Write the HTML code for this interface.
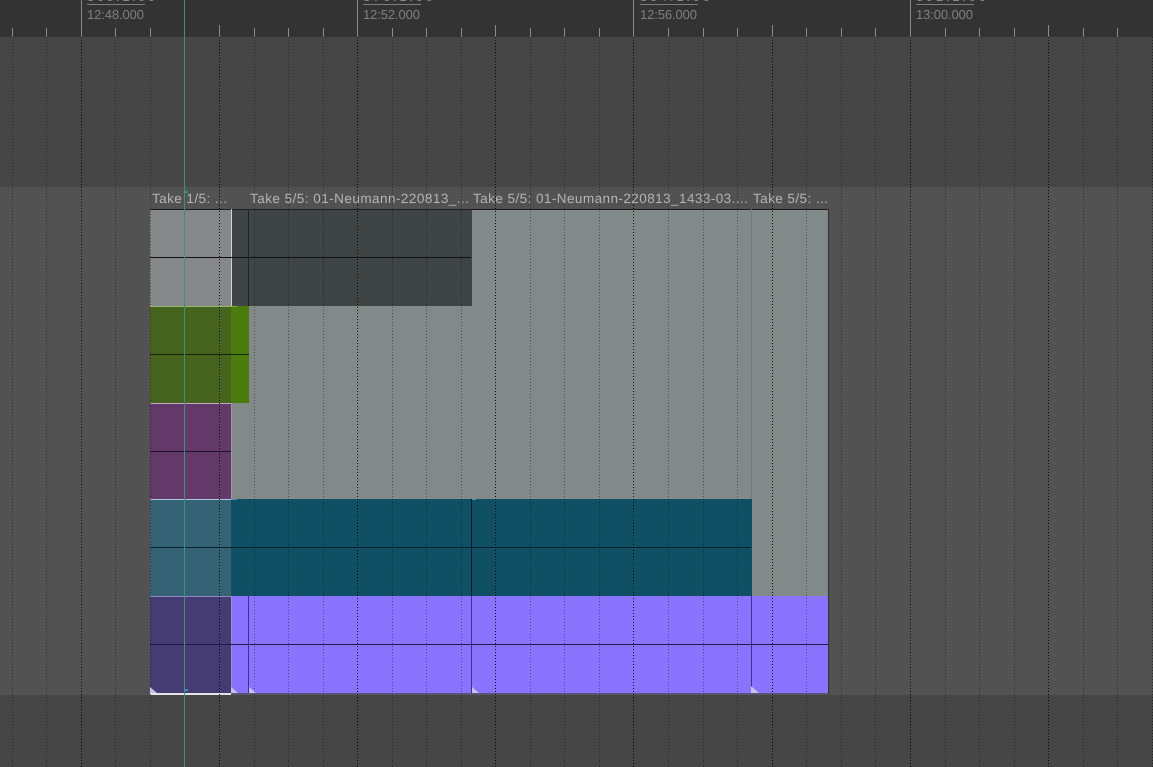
<!DOCTYPE html>
<html><head><meta charset="utf-8"><style>
html,body{margin:0;padding:0;background:#464646;width:1153px;height:767px;overflow:hidden}
svg{display:block;position:absolute;left:0;top:0}
text{font-family:"Liberation Sans",sans-serif}
</style></head><body>
<svg width="1153" height="767" viewBox="0 0 1153 767" shape-rendering="crispEdges">
<rect width="1153" height="767" fill="#464646"/>
<rect y="0" width="1153" height="37" fill="#333333"/>
<rect y="187" width="1153" height="508" fill="#525252"/>

<rect x="150" y="209" width="81" height="97" fill="#858888"/>
<rect x="231" y="209" width="597" height="387" fill="#818a88"/>
<rect x="231" y="209" width="241" height="97" fill="#3f4545"/>
<rect x="150" y="306" width="81" height="97" fill="#47641e"/>
<rect x="231" y="306" width="18" height="97" fill="#4a7c10"/>
<rect x="150" y="403" width="81" height="96" fill="#63396a"/>
<rect x="150" y="499" width="81" height="97" fill="#366276"/>
<rect x="231" y="499" width="521" height="97" fill="#0f5064"/>
<rect x="150" y="596" width="81" height="98" fill="#463c74"/>
<rect x="231" y="596" width="597" height="97" fill="#8a73ff"/>
<rect x="231" y="693" width="597" height="2" fill="#5a5570"/>
<rect x="150" y="693" width="81" height="2" fill="#e4e4e8"/>

<rect x="150" y="209" width="678" height="1" fill="#1c1c1c"/>
<rect x="828" y="209" width="1" height="485" fill="#2e2e38"/>
<rect x="231" y="209" width="1" height="97" fill="#d0d2d2"/>
<rect x="231" y="403" width="1" height="96" fill="#9a9a9e"/>
<rect x="231" y="596" width="1" height="97" fill="#9a94b8"/>
<rect x="150" y="306" width="81" height="1" fill="#9ab86a"/>
<rect x="231" y="306" width="6" height="1" fill="#7fb030"/>
<rect x="150" y="403" width="81" height="1" fill="#c0a8c8"/>
<rect x="150" y="499" width="81" height="1" fill="#b0c8dc"/>
<rect x="231" y="499" width="6" height="1" fill="#4a90a8"/>
<rect x="472" y="499" width="4" height="1" fill="#4a90a8"/>
<rect x="150" y="596" width="81" height="1" fill="#8f88c8"/>

<g fill="#000">
<rect x="150" y="257" width="321" height="1" fill="#101010"/>
<rect x="150" y="354" width="99" height="1" fill="#182008"/>
<rect x="150" y="451" width="81" height="1" fill="#20102a"/>
<rect x="150" y="547" width="601" height="1" fill="#04222c"/>
<rect x="150" y="644" width="678" height="1" fill="#201a50"/>
<rect x="248" y="209" width="1" height="97" fill="#1e2420"/>
<rect x="471" y="499" width="1" height="97" fill="#04222c"/>
<rect x="248" y="596" width="1" height="97" fill="#3a3090"/>
<rect x="471" y="596" width="1" height="97" fill="#3a3090"/>
<rect x="751" y="596" width="1" height="97" fill="#3a3090"/>
<rect x="751" y="209" width="1" height="290" fill="#737c7a"/>
</g>

<!-- minor grid -->
<g stroke="#000" stroke-opacity=".42" stroke-width="1" stroke-dasharray="1 2">
<path d="M12.5 37V767M46.5 37V767M115.5 37V767M150.5 37V767M254.5 37V767M288.5 37V767M323.5 37V767M392.5 37V767M426.5 37V767M461.5 37V767M530.5 37V767M564.5 37V767M599.5 37V767M668.5 37V767M703.5 37V767M737.5 37V767M806.5 37V767M841.5 37V767M875.5 37V767M945.5 37V767M979.5 37V767M1014.5 37V767M1083.5 37V767M1117.5 37V767M1152.5 37V767"/>
</g>
<!-- major grid -->
<g stroke="#000" stroke-opacity=".9" stroke-width="1" stroke-dasharray="1 2">
<path d="M81.5 37V767M219.5 37V767M357.5 37V767M495.5 37V767M633.5 37V767M772.5 37V767M910.5 37V767M1048.5 37V767"/>
</g>

<!-- ruler -->
<g stroke="#8a8a8a" stroke-width="1">
<path d="M81.5 0V37M357.5 0V37M633.5 0V37M910.5 0V37"/>
<path d="M219.5 25V37M495.5 25V37M772.5 25V37M1048.5 25V37"/>
<path d="M12.5 28V37M46.5 28V37M115.5 28V37M150.5 28V37M254.5 28V37M288.5 28V37M323.5 28V37M392.5 28V37M426.5 28V37M461.5 28V37M530.5 28V37M564.5 28V37M599.5 28V37M668.5 28V37M703.5 28V37M737.5 28V37M806.5 28V37M841.5 28V37M875.5 28V37M945.5 28V37M979.5 28V37M1014.5 28V37M1083.5 28V37M1117.5 28V37"/>
</g>
<g fill="#7d7d7d">
<rect x="87" y="4" width="58" height="1"/>
<rect x="363" y="4" width="58" height="1"/>
<rect x="640" y="4" width="58" height="1"/>
<rect x="916" y="4" width="58" height="1"/>
</g>
<g fill="#8a8a8a" font-size="13" shape-rendering="auto">
<text x="87" y="1" textLength="68">368.1.00</text>
<text x="363" y="1" textLength="70">376.1.00</text>
<text x="640" y="1" textLength="70">384.1.00</text>
<text x="916" y="1" textLength="70">392.1.00</text>
</g>
<g fill="#7f7f7f" font-size="13" shape-rendering="auto" text-rendering="geometricPrecision">
<text x="87" y="19" textLength="57">12:48.000</text>
<text x="363" y="19" textLength="57">12:52.000</text>
<text x="640" y="19" textLength="57">12:56.000</text>
<text x="916" y="19" textLength="57">13:00.000</text>
</g>

<!-- take labels -->
<g fill="#b4b4b4" font-size="13.5" shape-rendering="auto" text-rendering="geometricPrecision">
<text x="152" y="203" textLength="75">Take 1/5: ...</text>
<text x="250" y="203" textLength="219">Take 5/5: 01-Neumann-220813_...</text>
<text x="473" y="203" textLength="275">Take 5/5: 01-Neumann-220813_1433-03....</text>
<text x="753" y="203" textLength="75">Take 5/5: ...</text>
</g>

<!-- fade handles -->
<g fill="#c9c2ea" shape-rendering="auto">
<path d="M150 687L157 693H150Z"/>
<path d="M231 687L238 693H231Z"/>
<path d="M249 687L256 693H249Z"/>
<path d="M472 687L479 693H472Z"/>
<path d="M751 686L759 693H751Z"/>
</g>

<!-- cursor -->
<rect x="184" y="0" width="1" height="767" fill="#3f8f80"/>
<rect x="184" y="191" width="4" height="2" fill="#3f8f80"/>
<rect x="184" y="689" width="4" height="2" fill="#3f8f9a"/>
</svg>
</body></html>
